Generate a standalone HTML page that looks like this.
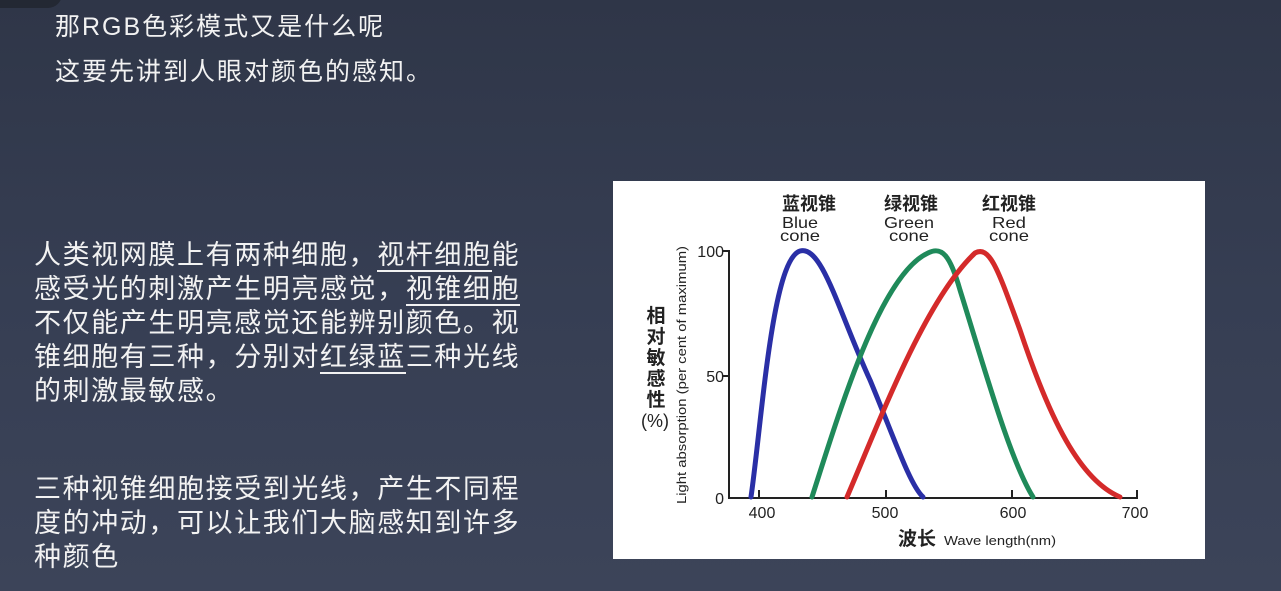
<!DOCTYPE html>
<html><head><meta charset="utf-8"><style>
html,body{margin:0;padding:0}
body{width:1281px;height:591px;overflow:hidden;position:relative;background:linear-gradient(180deg,#2f3648 0%,#363e53 50%,#3c4459 100%);font-family:"Liberation Sans","Noto Sans CJK SC",sans-serif;color:#f2f2f2}
.tab{position:absolute;left:0;top:-10px;width:62px;height:18px;background:#232833;border-radius:0 0 14px 0}
.h{position:absolute;left:55px;font-size:25px;letter-spacing:2px;line-height:30px;white-space:nowrap}
.p{position:absolute;left:34px;width:500px;font-size:27px;letter-spacing:1.6px;line-height:34px}
u{text-decoration:none;border-bottom:2px solid #f2f2f2}
.chart{position:absolute;left:613px;top:181px;width:592px;height:378px;background:#fff}
</style></head><body>
<div class="tab"></div>
<div class="h" style="top:12px">那RGB色彩模式又是什么呢</div>
<div class="h" style="top:57px">这要先讲到人眼对颜色的感知。</div>
<div class="p" style="top:238px">人类视网膜上有两种细胞，<u>视杆细胞</u>能感受光的刺激产生明亮感觉，<u>视锥细胞</u>不仅能产生明亮感觉还能辨别颜色。视锥细胞有三种，分别对<u>红绿蓝</u>三种光线的刺激最敏感。</div>
<div class="p" style="top:472px">三种视锥细胞接受到光线，产生不同程度的冲动，可以让我们大脑感知到许多种颜色</div>
<svg class="chart" viewBox="613 181 592 378" width="592" height="378" style="position:absolute">
<rect x="613" y="181" width="592" height="378" fill="#fff"/>
<g font-family="Liberation Sans, Noto Sans CJK SC, sans-serif" fill="#222" text-anchor="middle">
<text x="809" y="210" font-size="18" font-weight="bold">蓝视锥</text>
<text x="911" y="210" font-size="18" font-weight="bold">绿视锥</text>
<text x="1009" y="210" font-size="18" font-weight="bold">红视锥</text>
<text x="800" y="228" font-size="16" textLength="36" lengthAdjust="spacingAndGlyphs">Blue</text><text x="800" y="241" font-size="16" textLength="40" lengthAdjust="spacingAndGlyphs">cone</text>
<text x="909" y="228" font-size="16" textLength="50" lengthAdjust="spacingAndGlyphs">Green</text><text x="909" y="241" font-size="16" textLength="40" lengthAdjust="spacingAndGlyphs">cone</text>
<text x="1009" y="228" font-size="16" textLength="34" lengthAdjust="spacingAndGlyphs">Red</text><text x="1009" y="241" font-size="16" textLength="40" lengthAdjust="spacingAndGlyphs">cone</text>
<text x="724" y="257" font-size="16" text-anchor="end">100</text>
<text x="724" y="382" font-size="16" text-anchor="end">50</text>
<text x="724" y="504" font-size="16" text-anchor="end">0</text>
<text x="762" y="518" font-size="16">400</text>
<text x="885" y="518" font-size="16">500</text>
<text x="1013" y="518" font-size="16">600</text>
<text x="1135" y="518" font-size="16">700</text>
<text x="917" y="545" font-size="19" font-weight="bold">波长</text>
<text x="1000" y="545" font-size="13" textLength="112" lengthAdjust="spacingAndGlyphs">Wave length(nm)</text>
<text x="656" y="322" font-size="19" font-weight="bold">相</text>
<text x="656" y="343" font-size="19" font-weight="bold">对</text>
<text x="656" y="364" font-size="19" font-weight="bold">敏</text>
<text x="656" y="385" font-size="19" font-weight="bold">感</text>
<text x="656" y="406" font-size="19" font-weight="bold">性</text>
<text x="655" y="427" font-size="18">(%)</text>
<text transform="translate(686,375) rotate(-90)" font-size="13" textLength="258" lengthAdjust="spacingAndGlyphs">Light absorption (per cent of maximum)</text>
</g>
<g stroke="#222" stroke-width="2" fill="none">
<path d="M722 251H729V498H1137V490"/>
<path d="M722 376H729"/>
<path d="M759 498V490M886 498V490M1012 498V490"/>
</g>
<g fill="none" stroke-width="5" stroke-linecap="round">
<path d="M751 497C762 420 772 260 800 251C822 245 838 310 870 380C895 440 910 485 923 497" stroke="#2a2fa6"/>
<path d="M812 497C840 410 880 275 928 253C942 246 950 255 960 290C985 370 1010 460 1033 497" stroke="#1f8a5a"/>
<path d="M847 497C880 420 925 300 975 253C990 245 998 270 1020 330C1050 420 1080 480 1120 497" stroke="#d42a2a"/>
</g>
</svg>
</body></html>
